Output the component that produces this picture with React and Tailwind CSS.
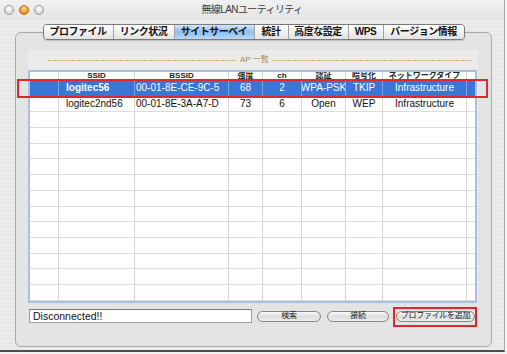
import React from "react";

const FONT = { fontFamily: '"Liberation Sans", "Noto Sans CJK JP", sans-serif' };

const tabs = [
  { label: "プロファイル", w: "w-[70px]" },
  { label: "リンク状況", w: "w-[61px]" },
  { label: "サイトサーベイ", w: "w-[80px]", active: true },
  { label: "統計", w: "w-[34px]" },
  { label: "高度な設定", w: "w-[60px]" },
  { label: "WPS", w: "w-[35px]" },
  { label: "バージョン情報", w: "w-[80px]" },
];

const headers = ["", "SSID", "BSSID", "強度", "ch", "認証", "暗号化", "ネットワークタイプ", ""];

const rows = [
  { sel: true, cells: ["", "logitec56", "00-01-8E-CE-9C-5", "68", "2", "WPA-PSK", "TKIP", "Infrastructure", ""] },
  { cells: ["", "logitec2nd56", "00-01-8E-3A-A7-D", "73", "6", "Open", "WEP", "Infrastructure", ""] },
];
for (let i = 0; i < 12; i++) rows.push({ cells: ["", "", "", "", "", "", "", "", ""] });

const GRID = "grid grid-cols-[29px_76px_94px_34px_39px_44px_37px_84px_1fr]";

function cellAlign(i) {
  if (i === 1) return "justify-start pl-[7px]";
  if (i === 2) return "justify-start pl-[1px]";
  return "justify-center";
}

function Light({ orange }) {
  return orange ? (
    <div className="w-[10px] h-[10px] rounded-full border border-[#b8651a] bg-[radial-gradient(circle_at_50%_30%,#ffe3a8_0%,#f7a93a_45%,#e07a10_100%)]" />
  ) : (
    <div className="w-[10px] h-[10px] rounded-full border border-[#9a9a9a] bg-[radial-gradient(circle_at_50%_30%,#ffffff_0%,#e4e4e4_50%,#c6c6c6_100%)]" />
  );
}

function Btn({ label, w }) {
  return (
    <div
      className={`${w} h-[11px] rounded-full border border-[#858585] bg-gradient-to-b from-[#fbfbfb] via-[#dedede] to-[#ececec] flex items-center justify-center text-[8px] leading-none text-[#222] tracking-[-0.3px]`}
    >
      {label}
    </div>
  );
}

export default function App() {
  return (
    <div className="w-[507px] h-[354px] relative overflow-hidden bg-[#f2f2f2]" style={FONT}>
      <div className="w-[505px] h-[352px] flex flex-col border-b-2 border-b-[#4e4e4e] border-r border-r-[#a8a8a8] bg-[image:repeating-linear-gradient(0deg,#ececec_0px,#ececec_2px,#e7e7e7_2px,#e7e7e7_4px)]">
        {/* title bar */}
        <div className="h-[20px] flex items-center pl-[4px] bg-gradient-to-b from-[#f1f1f1] to-[#e4e4e4]">
          <div className="flex gap-[5px] w-[40px]">
            <Light />
            <Light orange />
            <Light />
          </div>
          <div className="flex-1 text-center text-[10px] leading-none text-[#3a3a3a] tracking-[-0.6px] pr-[44px]">
            無線LANユーティリティ
          </div>
        </div>

        {/* body */}
        <div className="pt-[12px] pl-[15px]">
          <div className="w-[477px] h-[315px] rounded-[6px] border border-[#a9a9a9] bg-[#e4e4e4] flex flex-col">
            {/* tabs */}
            <div className="flex justify-center -mt-[9px]">
              <div className="flex h-[16px] rounded-[4px] border border-[#7a7a7a] overflow-hidden shadow-[0_1px_1px_rgba(0,0,0,0.15)]">
                {tabs.map((t, i) => (
                  <div
                    key={t.label}
                    className={`${t.w} flex items-center justify-center text-[10px] leading-none font-bold tracking-[-0.5px] text-[#111] ${
                      i < tabs.length - 1 ? "border-r border-r-[#a2a2a2]" : ""
                    } ${
                      t.active
                        ? "bg-gradient-to-b from-[#d4e7fb] via-[#8ebcef] to-[#b9d8f8]"
                        : "bg-gradient-to-b from-[#ffffff] via-[#f1f1f1] to-[#e2e2e2]"
                    }`}
                  >
                    {t.label}
                  </div>
                ))}
              </div>
            </div>

            {/* group box */}
            <div className="ml-[12px] mt-[10px] w-[450px] h-[253px] bg-[#ebebeb] flex flex-col">
              <div className="h-[20px] flex items-center pl-[20px] pr-[6px]">
                <div className="w-[188px] h-[1px] bg-[image:repeating-linear-gradient(90deg,#cfa771_0px,#cfa771_2px,transparent_2px,transparent_3px)]" />
                <div className="px-[4px] text-[8px] leading-none text-[#b08653]">AP 一覧</div>
                <div className="flex-1 h-[1px] bg-[image:repeating-linear-gradient(90deg,#cfa771_0px,#cfa771_2px,transparent_2px,transparent_3px)]" />
              </div>

              {/* table */}
              <div className="w-[449px] h-[233px] border-2 border-[#a6bfe3] bg-white overflow-hidden">
                <div className={`${GRID} h-[9px] border-b border-b-[#cfcfcf]`}>
                  {headers.map((h, i) => (
                    <div
                      key={i}
                      className={`flex items-center justify-center text-[8px] leading-none font-bold text-[#222] ${
                        i < headers.length - 1 ? "border-r border-r-[#d2d2d2]" : ""
                      }`}
                    >
                      {h}
                    </div>
                  ))}
                </div>
                {rows.map((r, ri) => (
                  <div
                    key={ri}
                    className={`${GRID} h-[15.7px] border-b ${
                      r.sel ? "bg-[#3a76d6] border-b-[#3a76d6]" : "border-b-[#dcdcdc]"
                    }`}
                  >
                    {r.cells.map((c, i) => (
                      <div
                        key={i}
                        className={`flex items-center overflow-hidden whitespace-nowrap text-[10px] leading-none ${cellAlign(i)} ${
                          r.sel ? "text-white" : "text-[#111]"
                        } ${r.sel && i === 1 ? "font-bold" : ""} ${
                          i < r.cells.length - 1
                            ? r.sel
                              ? "border-r border-r-[#7ea3e2]"
                              : "border-r border-r-[#d6d6d6]"
                            : ""
                        }`}
                      >
                        {c}
                      </div>
                    ))}
                  </div>
                ))}
              </div>
            </div>

            {/* bottom row */}
            <div className="ml-[13px] mt-[6px] flex items-center">
              <div className="w-[223px] h-[14px] bg-white border border-[#9c9c9c] border-t-[#777] flex items-center pl-[3px] text-[10.5px] leading-none text-[#111]">
                Disconnected!!
              </div>
              <div className="ml-[5px]">
                <Btn label="検索" w="w-[64px]" />
              </div>
              <div className="ml-[6px]">
                <Btn label="接続" w="w-[62px]" />
              </div>
              <div className="ml-[7px]">
                <Btn label="プロファイルを追加" w="w-[79px]" />
              </div>
            </div>
          </div>
        </div>
      </div>

      {/* red annotation boxes */}
      <div className="absolute left-[17px] top-[79px] w-[471px] h-[19px] border-2 border-[#e3262e]" />
      <div className="absolute left-[393px] top-[307px] w-[84px] h-[20px] border-2 border-[#e3262e]" />
    </div>
  );
}
